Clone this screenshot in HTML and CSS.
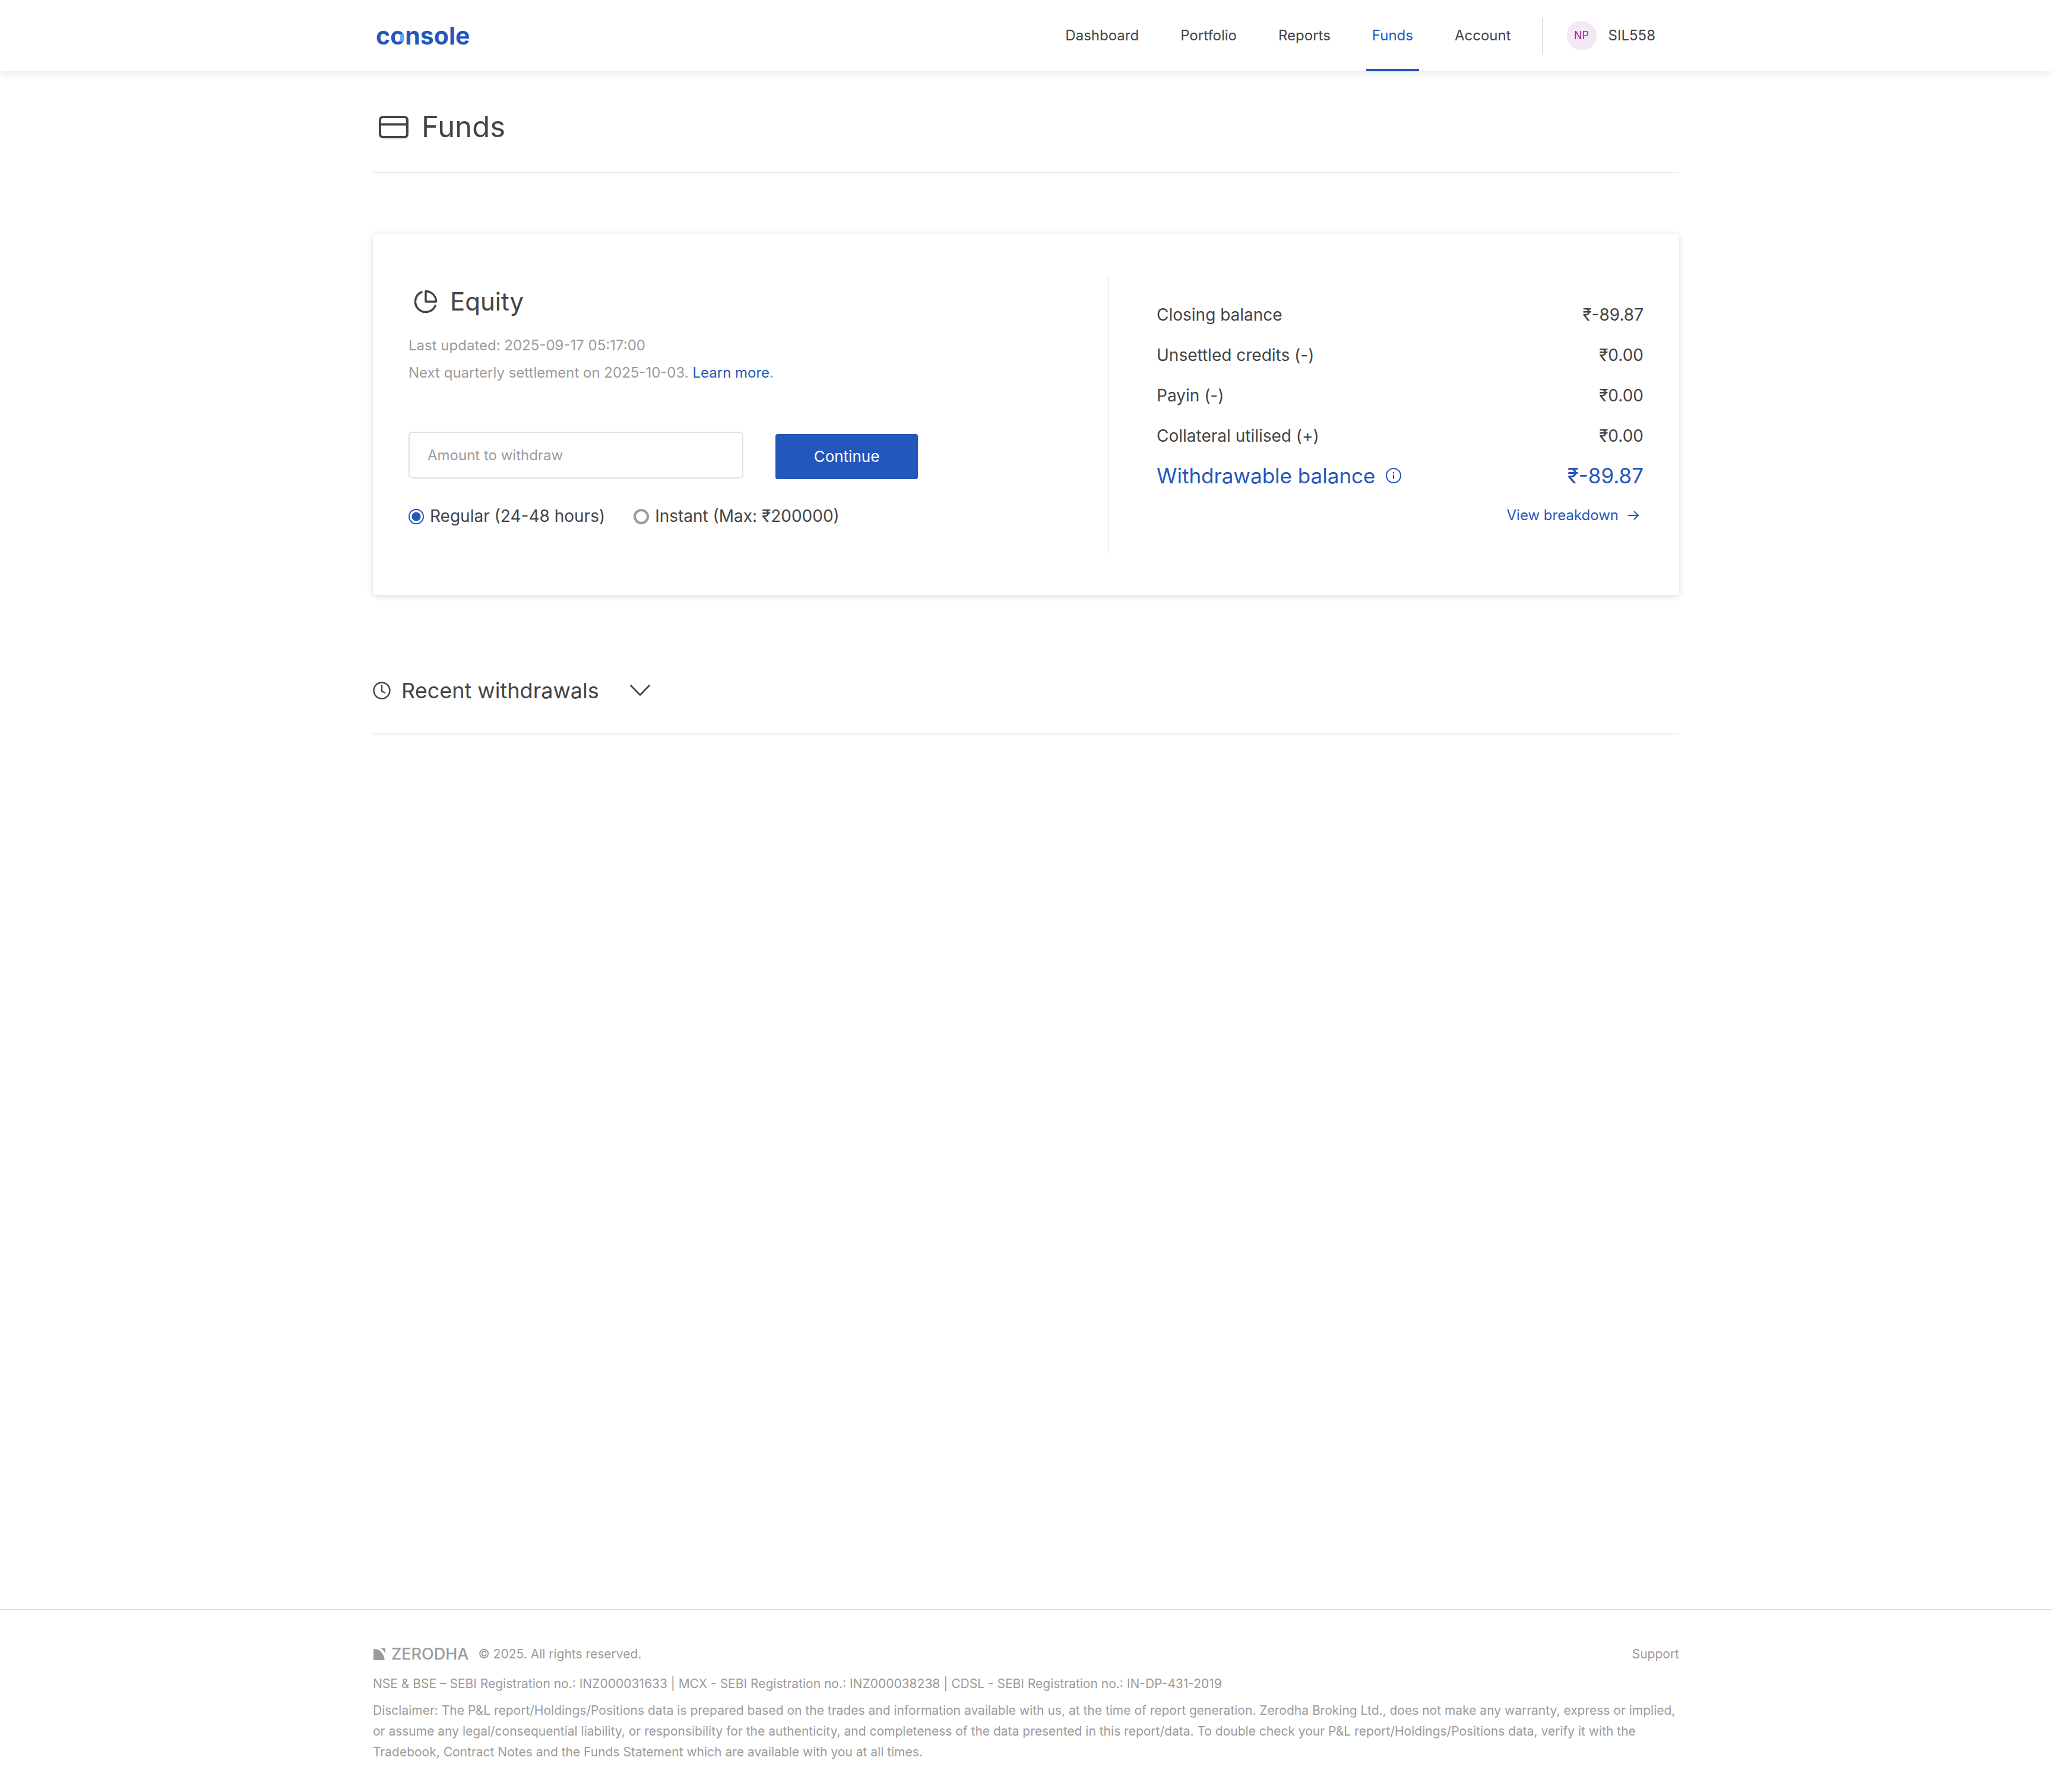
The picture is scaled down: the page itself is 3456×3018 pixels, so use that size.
FILE: index.html
```html
<!DOCTYPE html>
<html lang="en">
<head>
<meta charset="utf-8">
<meta name="viewport" content="width=device-width, initial-scale=1">
<title>Funds / Console</title>
<link rel="stylesheet" href="styles.css">
</head>
<body>
<header class="topbar">
  <div class="container topbar-inner">
    <a class="logo" href="#">c<span class="logo-o">o</span>nsole</a>
    <nav class="nav" aria-label="Main">
      <a class="nav-link" href="#">Dashboard</a>
      <a class="nav-link" href="#">Portfolio</a>
      <a class="nav-link" href="#">Reports</a>
      <a class="nav-link active" href="#" aria-current="page">Funds</a>
      <a class="nav-link" href="#">Account</a>
    </nav>
    <a class="user" href="#"><span class="avatar">NP</span><span>SIL558</span></a>
  </div>
</header>

<main class="container main">
  <h1 class="page-title">
    <svg class="icon-card" viewBox="0 0 50 38" fill="none" stroke="currentColor" stroke-width="4" aria-hidden="true"><rect x="2" y="2" width="46" height="34" rx="5"/><path d="M2 14.500h46"/></svg>
    Funds
  </h1>

  <section class="card">
    <div class="withdraw">
      <h2 class="segment-title">
        <svg class="icon-pie" viewBox="0 0 24 24" fill="none" stroke="currentColor" stroke-width="2" stroke-linecap="round" stroke-linejoin="round" aria-hidden="true"><path d="M21.210 15.890A10 10 0 1 1 8 2.830"/><path d="M22 12A10 10 0 0 0 12 2v10z"/></svg>
        Equity
      </h2>
      <p class="note">Last updated: 2025-09-17 05:17:00</p>
      <p class="note">Next quarterly settlement on 2025-10-03. <a class="link" href="#">Learn more</a>.</p>
      <form class="form">
        <div class="form-row">
          <input class="amount" type="text" placeholder="Amount to withdraw" aria-label="Amount to withdraw">
          <button class="button" type="submit">Continue</button>
        </div>
        <div class="options">
          <label class="option"><input class="radio" type="radio" name="mode" checked>Regular (24-48 hours)</label>
          <label class="option"><input class="radio" type="radio" name="mode">Instant (Max: ₹200000)</label>
        </div>
      </form>
    </div>
    <div class="balances">
      <table class="table">
        <tbody>
          <tr><th scope="row">Closing balance</th><td>₹-89.87</td></tr>
          <tr><th scope="row">Unsettled credits (-)</th><td>₹0.00</td></tr>
          <tr><th scope="row">Payin (-)</th><td>₹0.00</td></tr>
          <tr><th scope="row">Collateral utilised (+)</th><td>₹0.00</td></tr>
          <tr class="total"><th scope="row"><span class="total-label">Withdrawable balance
            <svg class="icon-info" viewBox="0 0 26 26" fill="none" stroke="currentColor" stroke-width="2" aria-hidden="true"><circle cx="13" cy="13" r="12"/><path d="M13 11.500v7M13 7v2.500"/></svg></span></th><td>₹-89.87</td></tr>
        </tbody>
      </table>
      <a class="breakdown" href="#">View breakdown
        <svg class="icon-arrow" viewBox="0 0 18 16" fill="none" stroke="currentColor" stroke-width="2" aria-hidden="true"><path d="M0 8h17M10 1l7 7-7 7"/></svg>
      </a>
    </div>
  </section>

  <h2 class="recent">
    <svg class="icon-clock" viewBox="0 0 30 30" fill="none" stroke="currentColor" stroke-width="2.400" aria-hidden="true"><circle cx="15" cy="15" r="13.500"/><path d="M15 6v10l6 3"/></svg>
    Recent withdrawals
    <button class="toggle" type="button" aria-label="Show recent withdrawals"><svg class="icon-chevron" viewBox="0 0 34 20" fill="none" stroke="currentColor" stroke-width="2.600" stroke-linecap="round" stroke-linejoin="round" aria-hidden="true"><path d="M1.500 1.500L17 17.500 32.500 1.500"/></svg></button>
  </h2>
</main>

<footer class="footer">
  <div class="container">
    <div class="footer-top">
      <div class="brand">
        <svg class="icon-brand" viewBox="0 0 22 20" fill="currentColor" aria-hidden="true"><path d="M1 1.500C11 0 18 8 20 20H1z"/><path d="M13 0h8v10C19.500 5.500 17 2 13 0z"/></svg>
        <span class="brand-name">ZERODHA</span>
        <span>© 2025. All rights reserved.</span>
      </div>
      <a class="support" href="#">Support</a>
    </div>
    <p class="registration">NSE &amp; BSE – SEBI Registration no.: INZ000031633 | MCX - SEBI Registration no.: INZ000038238 | CDSL - SEBI Registration no.: IN-DP-431-2019</p>
    <p class="disclaimer">Disclaimer: The P&amp;L report/Holdings/Positions data is prepared based on the trades and information available with us, at the time of report generation. Zerodha Broking Ltd., does not make any warranty, express or implied, or assume any legal/consequential liability, or responsibility for the authenticity, and completeness of the data presented in this report/data. To double check your P&amp;L report/Holdings/Positions data, verify it with the Tradebook, Contract Notes and the Funds Statement which are available with you at all times.</p>
  </div>
</footer>
</body>
</html>
```

FILE: styles.css
```css
:root {
  --blue: #2457bb;
  --text: #444;
  --muted: #9b9b9b;
  --line: #eee;
}

* {
  box-sizing: border-box;
}

body {
  display: flex;
  flex-direction: column;
  min-height: 100vh;
  margin: 0;
  background: #fff;
  color: var(--text);
  font: 400 24px/34px Inter, "Liberation Sans", sans-serif;
}

h1,
h2,
p {
  margin: 0;
  font-weight: 400;
}

a {
  color: inherit;
  text-decoration: none;
}

svg {
  display: block;
  flex: none;
}

.container {
  width: 100%;
  max-width: 2200px;
  margin: 0 auto;
}

/* Top bar */
.topbar {
  background: #fff;
  box-shadow: 0 0 16px rgba(0, 0, 0, 0.14);
}

.topbar-inner {
  display: flex;
  align-items: center;
  height: 120px;
  padding: 0 40px 0 5px;
}

.logo {
  margin-right: auto;
  color: var(--blue);
  font-size: 41px;
  font-weight: 700;
  line-height: 60px;
}

/* The right side of the "o" carries a light blue segment */
.logo-o {
  background: linear-gradient(#4fb0f5, #4fb0f5) right 22px / 8px 13px no-repeat, var(--blue);
  background-clip: text;
  -webkit-background-clip: text;
  color: transparent;
}

.nav {
  display: flex;
  gap: 50px;
  padding-right: 42px;
}

.nav-link {
  padding: 0 10px;
  line-height: 120px;
}

.nav-link.active {
  color: var(--blue);
  box-shadow: inset 0 -4px var(--blue);
}

.user {
  display: flex;
  align-items: center;
  gap: 20px;
  height: 60px;
  padding-left: 40px;
  border-left: 2px solid #e0e0e0;
}

.avatar {
  width: 50px;
  height: 50px;
  border-radius: 50%;
  background: #f3e9f5;
  color: #9c27b0;
  font-size: 18px;
  line-height: 50px;
  text-align: center;
}

/* Page */
.main {
  flex: 1;
  padding-top: 64px;
}

.page-title {
  display: flex;
  align-items: center;
  gap: 22px;
  padding: 0 0 46px 10px;
  border-bottom: 2px solid var(--line);
  font-size: 49px;
  line-height: 60px;
}

.icon-card {
  width: 50px;
  height: 38px;
}

.card {
  display: grid;
  grid-template-columns: 59fr 45fr;
  margin-top: 102px;
  padding: 70px 60px;
  border-radius: 6px;
  background: #fff;
  box-shadow: 0 2px 12px rgba(0, 0, 0, 0.14);
}

.withdraw {
  padding: 14px 0 42px;
  border-right: 2px solid #f0f0f0;
}

.segment-title {
  display: flex;
  align-items: center;
  gap: 20px;
  margin-bottom: 21px;
  padding-left: 8px;
  font-size: 42px;
  line-height: 60px;
}

.icon-pie {
  width: 42px;
  height: 42px;
}

.note {
  color: var(--muted);
  line-height: 46px;
}

.link {
  color: var(--blue);
}

.form {
  margin-top: 76px;
}

.form-row {
  display: flex;
  align-items: flex-start;
  gap: 54px;
}

.amount {
  width: 564px;
  height: 79px;
  padding: 0 30px;
  border: 2px solid #e0e0e0;
  border-radius: 6px;
  background: #fff;
  color: var(--text);
  font: inherit;
}

.amount::placeholder {
  color: var(--muted);
  opacity: 1;
}

.button {
  width: 240px;
  height: 76px;
  margin-top: 4px;
  border: 0;
  border-radius: 4px;
  background: var(--blue);
  color: #fff;
  font: inherit;
  font-size: 26px;
}

.options {
  display: flex;
  gap: 48px;
  margin-top: 44px;
  font-size: 28px;
  line-height: 36px;
}

.option {
  display: flex;
  align-items: center;
  gap: 10px;
}

.radio {
  appearance: none;
  width: 26px;
  height: 26px;
  margin: 2px 0 0;
  border: 4px solid var(--muted);
  border-radius: 50%;
  background: #fff;
}

.radio:checked {
  border: 2px solid var(--blue);
  background: radial-gradient(circle, var(--blue) 7px, #fff 8px);
}

.balances {
  display: flex;
  flex-direction: column;
  padding: 32px 0 30px 80px;
}

.table {
  width: 100%;
  border-collapse: collapse;
  font-size: 28px;
}

.table th,
.table td {
  height: 68px;
  padding: 0;
  font-weight: 400;
  text-align: left;
}

.table td {
  text-align: right;
}

.table .total th,
.table .total td {
  height: 66px;
  color: var(--blue);
  font-size: 35px;
}

.total-label {
  display: flex;
  align-items: center;
  gap: 18px;
}

.icon-info {
  width: 26px;
  height: 26px;
}

.breakdown {
  display: flex;
  align-items: center;
  align-self: flex-end;
  gap: 16px;
  padding-right: 8px;
  color: var(--blue);
  line-height: 68px;
}

.icon-arrow {
  width: 18px;
  height: 16px;
}

.recent {
  display: flex;
  align-items: center;
  gap: 18px;
  margin-top: 131px;
  padding-bottom: 42px;
  border-bottom: 2px solid var(--line);
  font-size: 36px;
  line-height: 60px;
}

.icon-clock {
  width: 30px;
  height: 30px;
}

.toggle {
  margin: 0 0 0 34px;
  padding: 0;
  border: 0;
  background: none;
  color: inherit;
}

.icon-chevron {
  width: 34px;
  height: 20px;
}

/* Footer */
.footer {
  padding: 57px 0 50px;
  border-top: 2px solid #dfdfdf;
  color: var(--muted);
  font-size: 21px;
}

.footer-top {
  display: flex;
  justify-content: space-between;
}

.brand {
  display: flex;
  align-items: center;
}

.icon-brand {
  width: 22px;
  height: 20px;
}

.brand-name {
  margin: 0 16px 0 9px;
  font-size: 27px;
  font-weight: 500;
}

.registration {
  margin: 16px 0 10px;
}

.disclaimer {
  line-height: 35px;
}
```
